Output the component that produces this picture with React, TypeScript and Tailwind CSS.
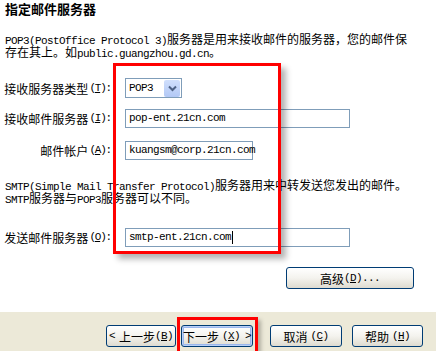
import type { ReactNode } from "react";

const M = ({ children }: { children: ReactNode }) => (
    <span className="font-['Liberation_Mono',monospace] text-[11px] tracking-[-0.6px]">{children}</span>
);

const Key = ({ k, gap }: { k: string; gap?: boolean }) => (
    <M>
        <span className={gap ? "ml-[3px]" : ""}>(</span>
        <u className="underline-offset-1">{k}</u>)
    </M>
);

// label suffix like "(T):" — set a little tighter so the column ends where the reference does
const LabelKey = ({ k }: { k: string }) => (
    <span className="ml-px font-['Liberation_Mono',monospace] text-[11px] tracking-[-1.2px]">
        (<u className="underline-offset-1">{k}</u>):
    </span>
);

function Line({ children }: { children: ReactNode }) {
    return <div className="h-[13px] whitespace-nowrap leading-[13px]">{children}</div>;
}

function Label({ children }: { children: ReactNode }) {
    return <div className="flex h-[19px] w-[111px] shrink-0 items-center justify-end whitespace-nowrap">{children}</div>;
}

function TextBox({ value, width, caret }: { value: string; width: string; caret?: boolean }) {
    return (
        <div className={`ml-[14px] flex h-[19px] items-center border border-[#7f9db9] bg-white px-[3px] ${width}`}>
            <M>{value}</M>
            {caret && <span className="ml-[1px] h-[13px] w-px bg-black" />}
        </div>
    );
}

function XpButton({ children, width, isDefault }: { children: ReactNode; width: string; isDefault?: boolean }) {
    return (
        <div
            className={`flex h-[22px] items-center justify-center whitespace-nowrap rounded-[3px] border border-[#003c74] bg-gradient-to-b from-white via-[#f4f3ee] to-[#dedbd0] ${width} ${
                isDefault ? "shadow-[inset_0_0_0_1px_#b9d0f7,inset_0_0_0_2px_#9ab6ec]" : ""
            }`}
        >
            {children}
        </div>
    );
}

export default function App() {
    return (
        <div className="relative h-[351px] w-[436px] overflow-hidden bg-white font-['Noto_Sans_CJK_SC',sans-serif] text-[12px] leading-[13px] text-black">
            <div className="flex h-[312px] flex-col pl-[5px]">
                <h1 className="mt-[2px] h-[14px] text-[13px] font-bold leading-[14px]">指定邮件服务器</h1>
                <div className="mt-[16px]">
                    <Line>
                        <M>POP3(PostOffice Protocol 3)</M>服务器是用来接收邮件的服务器，您的邮件保
                    </Line>
                    <Line>
                        存在其上。如<M>public.guangzhou.gd.cn</M>。
                    </Line>
                </div>

                <div className="-ml-[5px] mt-[20px] flex h-[20px] items-center">
                    <Label>
                        接收服务器类型
                        <LabelKey k="T" />
                    </Label>
                    <div className="ml-[14px] flex h-[20px] w-[57px] items-center justify-between border border-[#7f9db9] bg-white pl-[3px] pr-px">
                        <M>POP3</M>
                        <div className="flex h-[17px] w-[16px] items-center justify-center rounded-[2px] bg-gradient-to-b from-[#d0dffc] to-[#b2c8f5]">
                            <svg width="9" height="7" viewBox="0 0 9 7">
                                <path d="M1 1.5 L4.5 5 L8 1.5" fill="none" stroke="#4d6185" strokeWidth="2" />
                            </svg>
                        </div>
                    </div>
                </div>

                <div className="-ml-[5px] mt-[11px] flex h-[19px] items-center">
                    <Label>
                        接收邮件服务器
                        <LabelKey k="I" />
                    </Label>
                    <TextBox value="pop-ent.21cn.com" width="w-[225px]" />
                </div>

                <div className="-ml-[5px] mt-[13px] flex h-[19px] items-center">
                    <Label>
                        邮件帐户
                        <LabelKey k="A" />
                    </Label>
                    <TextBox value="kuangsm@corp.21cn.com" width="w-[128px]" />
                </div>

                <div className="mt-[18px]">
                    <Line>
                        <M>SMTP(Simple Mail Transfer Protocol)</M>服务器用来中转发送您发出的邮件。
                    </Line>
                    <Line>
                        <M>SMTP</M>服务器与<M>POP3</M>服务器可以不同。
                    </Line>
                </div>

                <div className="-ml-[5px] mt-[24px] flex h-[19px] items-center">
                    <Label>
                        发送邮件服务器
                        <LabelKey k="O" />
                    </Label>
                    <TextBox value="smtp-ent.21cn.com" width="w-[225px]" caret />
                </div>

                <div className="mt-[20px] flex justify-end pr-[22px]">
                    <XpButton width="w-[128px]">
                        高级
                        <Key k="D" />
                        <M>...</M>
                    </XpButton>
                </div>
            </div>

            <div className="flex h-[39px] items-start bg-[#ece9d8] pl-[106px] pt-[13px]">
                <XpButton width="w-[70px]">
                    <M>&lt;</M>
                    <span className="ml-[4px]">上一步</span>
                    <Key k="B" />
                </XpButton>
                <div className="ml-[5px]">
                    <XpButton width="w-[72px]" isDefault>
                        下一步
                        <Key k="X" gap />
                        <M>
                            <span className="ml-[5px]">&gt;</span>
                        </M>
                    </XpButton>
                </div>
                <div className="ml-[17px]">
                    <XpButton width="w-[72px]">
                        取消
                        <Key k="C" gap />
                    </XpButton>
                </div>
                <div className="ml-[10px]">
                    <XpButton width="w-[71px]">
                        帮助
                        <Key k="H" gap />
                    </XpButton>
                </div>
            </div>

            {/* annotation overlays */}
            <div className="absolute left-[113px] top-[63px] h-[191px] w-[168px] border-[3px] border-[#ff0000] shadow-[5px_5px_6px_rgba(0,0,0,0.3)]" />
            <div className="absolute left-[177px] top-[317px] h-[37px] w-[81px] border-[3px] border-[#ff0000] shadow-[3px_3px_4px_rgba(0,0,0,0.25)]" />
        </div>
    );
}
